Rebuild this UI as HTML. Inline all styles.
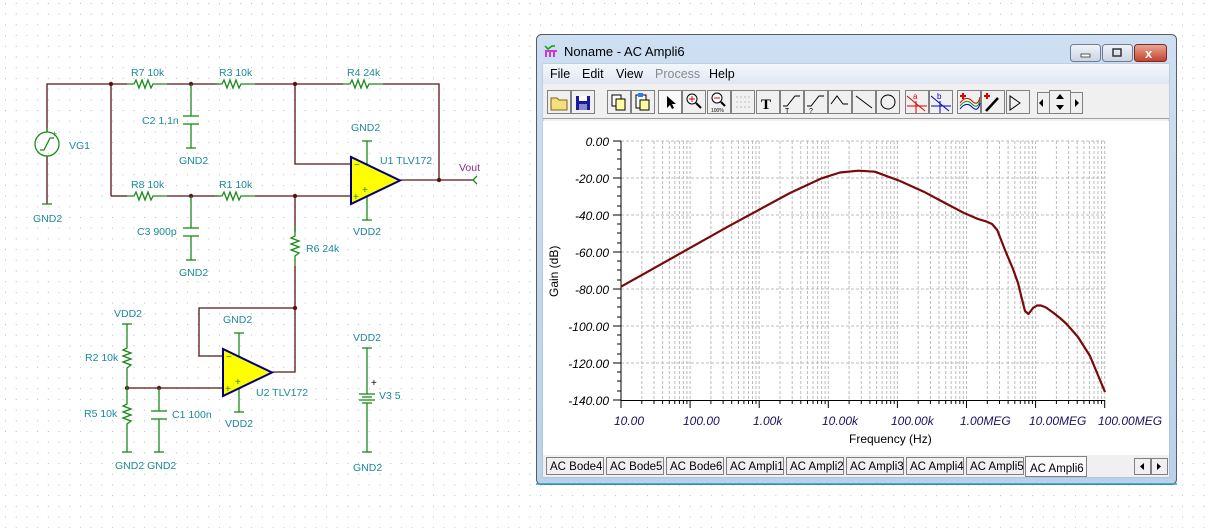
<!DOCTYPE html>
<html><head><meta charset="utf-8"><style>
html,body{margin:0;padding:0;background:#fff;}
body{width:1212px;height:528px;overflow:hidden;position:relative;font-family:"Liberation Sans",sans-serif;}
svg{position:absolute;left:0;top:0;}
</style></head><body>
<svg width="1212" height="528" viewBox="0 0 1212 528" xmlns="http://www.w3.org/2000/svg" font-family="Liberation Sans, sans-serif">
<defs>
<pattern id="dots" x="5" y="3" width="10.7" height="10.7" patternUnits="userSpaceOnUse"><rect x="0" y="0" width="1" height="1" fill="#b8b8b8"/></pattern>
<linearGradient id="tb" x1="0" y1="0" x2="0" y2="1"><stop offset="0" stop-color="#cfdff2"/><stop offset="1" stop-color="#b9d1ea"/></linearGradient>
<linearGradient id="mb" x1="0" y1="0" x2="0" y2="1"><stop offset="0" stop-color="#f4f7fc"/><stop offset="1" stop-color="#dfe6f2"/></linearGradient>
<linearGradient id="btn" x1="0" y1="0" x2="0" y2="1"><stop offset="0" stop-color="#f2f4f8"/><stop offset="1" stop-color="#c9d4e4"/></linearGradient>
<linearGradient id="red" x1="0" y1="0" x2="0" y2="1"><stop offset="0" stop-color="#e9a99a"/><stop offset="1" stop-color="#c4402a"/></linearGradient>
</defs>
<rect width="1212" height="528" fill="url(#dots)"/>

<!-- ============ SCHEMATIC ============ -->
<g stroke="#5a1414" stroke-width="1.3" fill="none">
<polyline points="47,132 47,84 127,84"/>
<line x1="167" y1="84" x2="219" y2="84"/>
<line x1="255" y1="84" x2="343" y2="84"/>
<polyline points="383,84 439,84 439,180"/>
<line x1="111" y1="84" x2="111" y2="196"/>
<line x1="111" y1="196" x2="127" y2="196"/>
<line x1="167" y1="196" x2="219" y2="196"/>
<line x1="255" y1="196" x2="350" y2="196"/>
<polyline points="295,84 295,164 350,164"/>
<line x1="400" y1="180" x2="473" y2="180"/>
<line x1="295" y1="196" x2="295" y2="232"/>
<polyline points="295,266 295,372 272,372"/>
<polyline points="295,308 199,308 199,356 222,356"/>
<line x1="127" y1="388" x2="222" y2="388"/>
<line x1="47" y1="156" x2="47" y2="204"/>
</g>
<g fill="#5a1414">
<circle cx="111" cy="84" r="2.2"/><circle cx="191" cy="84" r="2.2"/><circle cx="295" cy="84" r="2.2"/>
<circle cx="191" cy="196" r="2.2"/><circle cx="295" cy="196" r="2.2"/><circle cx="439" cy="180" r="2.2"/>
<circle cx="295" cy="308" r="2.2"/><circle cx="127" cy="388" r="2.2"/><circle cx="159" cy="388" r="2.2"/>
</g>
<g stroke="#1a8a1a" stroke-width="1.3" fill="none">
<!-- resistors horizontal -->
<polyline points="127,84 134,84 136,80 139,88 142,80 145,88 148,80 151,88 153,84 167,84"/>
<polyline points="215,84 222,84 224,80 227,88 230,80 233,88 236,80 239,88 241,84 255,84"/>
<polyline points="343,84 350,84 352,80 355,88 358,80 361,88 364,80 367,88 369,84 383,84"/>
<polyline points="127,196 134,196 136,192 139,200 142,192 145,200 148,192 151,200 153,196 167,196"/>
<polyline points="215,196 222,196 224,192 227,200 230,192 233,200 236,192 239,200 241,196 255,196"/>
<!-- R6 vertical -->
<polyline points="295,226 295,236 291,238 299,241 291,244 299,247 291,250 299,253 295,256 295,266"/>
<!-- R2, R5 -->
<polyline points="127,324 127,348 123,350 131,353 123,356 131,359 123,362 131,365 127,368 127,388"/>
<polyline points="127,388 127,404 123,406 131,409 123,412 131,415 123,418 131,421 127,424 127,452"/>
<line x1="122" y1="324" x2="132" y2="324"/><line x1="122" y1="452" x2="132" y2="452"/>
<!-- C2 -->
<line x1="191" y1="84" x2="191" y2="116"/><line x1="183" y1="116" x2="199" y2="116"/><line x1="183" y1="124" x2="199" y2="124"/><line x1="191" y1="124" x2="191" y2="148"/><line x1="186" y1="148" x2="196" y2="148"/>
<!-- C3 -->
<line x1="191" y1="196" x2="191" y2="228"/><line x1="183" y1="228" x2="199" y2="228"/><line x1="183" y1="236" x2="199" y2="236"/><line x1="191" y1="236" x2="191" y2="260"/><line x1="186" y1="260" x2="196" y2="260"/>
<!-- C1 -->
<line x1="159" y1="388" x2="159" y2="411"/><line x1="151" y1="411" x2="167" y2="411"/><line x1="151" y1="419" x2="167" y2="419"/><line x1="159" y1="419" x2="159" y2="452"/><line x1="154" y1="452" x2="164" y2="452"/>
<!-- VG1 -->
<circle cx="47" cy="144" r="12"/><path d="M40,150 L44,150 L50,138 L54,138"/><line x1="47" y1="128" x2="47" y2="132"/>
<line x1="42" y1="204" x2="52" y2="204"/>
<!-- U1 supply -->
<line x1="367" y1="141" x2="367" y2="165"/><line x1="362" y1="141" x2="372" y2="141"/>
<line x1="367" y1="197" x2="367" y2="220"/><line x1="362" y1="220" x2="372" y2="220"/>
<!-- U2 supply -->
<line x1="239" y1="333" x2="239" y2="357"/><line x1="234" y1="333" x2="244" y2="333"/>
<line x1="239" y1="388" x2="239" y2="412"/><line x1="234" y1="412" x2="244" y2="412"/>
<!-- V3 -->
<line x1="367" y1="348" x2="367" y2="394"/><line x1="362" y1="348" x2="372" y2="348"/>
<line x1="359" y1="394" x2="375" y2="394"/><line x1="362" y1="397" x2="372" y2="397"/>
<line x1="359" y1="400" x2="375" y2="400"/><line x1="362" y1="403" x2="372" y2="403"/>
<line x1="367" y1="403" x2="367" y2="452"/><line x1="362" y1="452" x2="372" y2="452"/>
<!-- Vout -->
<path d="M477,176 L473,180 L477,184"/>
</g>
<text x="52" y="137" font-size="9" fill="#1a8a1a">+</text>
<text x="371" y="386" font-size="10" fill="#000">+</text>
<!-- opamps -->
<polygon points="351,157 351,204 400,180.5" fill="#ffff00" stroke="#000080" stroke-width="2"/>
<polygon points="223,349 223,396 272,372.5" fill="#ffff00" stroke="#000080" stroke-width="2"/>
<g fill="#1a8a1a" font-size="10"><text x="354" y="168">−</text><text x="353" y="200">+</text><text x="362" y="193">+</text>
<text x="226" y="360">−</text><text x="225" y="392">+</text><text x="235" y="385">+</text></g>
<!-- labels -->
<g fill="#1a8a9a" font-size="10.5">
<text x="131" y="76">R7 10k</text><text x="219" y="76">R3 10k</text><text x="347" y="76">R4 24k</text>
<text x="142" y="124">C2 1,1n</text><text x="179" y="164">GND2</text>
<text x="69" y="149">VG1</text><text x="33" y="222">GND2</text>
<text x="131" y="188">R8 10k</text><text x="219" y="188">R1 10k</text>
<text x="137" y="235">C3 900p</text><text x="179" y="276">GND2</text>
<text x="351" y="131">GND2</text><text x="380" y="164">U1 TLV172</text><text x="353" y="235">VDD2</text>
<text x="306" y="252">R6 24k</text>
<text x="114" y="317">VDD2</text><text x="223" y="323">GND2</text>
<text x="85" y="361">R2 10k</text><text x="84" y="417">R5 10k</text><text x="172" y="418">C1 100n</text>
<text x="256" y="396">U2 TLV172</text><text x="225" y="427">VDD2</text>
<text x="353" y="341">VDD2</text><text x="379" y="399">V3 5</text>
<text x="115" y="469">GND2 GND2</text><text x="353" y="471">GND2</text>
</g>
<text x="459" y="171" font-size="10.5" fill="#8a2a9a">Vout</text>

<!-- ============ WINDOW ============ -->
<rect x="536.5" y="34.5" width="640" height="450" rx="5" fill="url(#tb)" stroke="#555d6a"/>
<rect x="543" y="64" width="626" height="413" fill="#f0f0f0" stroke="#8fa4be" stroke-width="0.5"/>
<!-- title -->
<g stroke-width="1.5" fill="none"><path d="M545,46 l3,3 4,-3 3,0" stroke="#00aa00"/><path d="M545,51 h12" stroke="#cc00cc"/><path d="M546,52 v5 M550,52 v5 M554,52 v5" stroke="#cc00cc"/></g>
<text x="564" y="56" font-size="13" fill="#000">Noname - AC Ampli6</text>
<rect x="1070.5" y="44.5" width="30" height="17" rx="3" fill="url(#btn)" stroke="#6d7c93"/>
<rect x="1081" y="54" width="9" height="3" fill="#fff" stroke="#333" stroke-width="0.8"/>
<rect x="1102.5" y="44.5" width="30" height="17" rx="3" fill="url(#btn)" stroke="#6d7c93"/>
<rect x="1113" y="49" width="8" height="7" fill="none" stroke="#333" stroke-width="1.5"/>
<rect x="1134.5" y="44.5" width="32" height="17" rx="3" fill="url(#red)" stroke="#7a2a22"/>
<text x="1145" y="58" font-size="13" font-weight="bold" fill="#fff">x</text>
<!-- menu -->
<rect x="543" y="64" width="626" height="20" fill="url(#mb)"/>
<g font-size="12.5" fill="#000"><text x="550" y="78">File</text><text x="582" y="78">Edit</text><text x="616" y="78">View</text><text x="655" y="78" fill="#8a8a8a">Process</text><text x="709" y="78">Help</text></g>
<!-- toolbar -->
<rect x="543" y="84" width="626" height="35" fill="#f0f0f0"/>
<line x1="543" y1="118.5" x2="1169" y2="118.5" stroke="#a0a0a0"/>
<g fill="#f0f0f0" stroke="#808080">
<rect x="547.5" y="90.5" width="23" height="23"/><rect x="571.5" y="90.5" width="23" height="23"/>
<rect x="607.5" y="90.5" width="23" height="23"/><rect x="631.5" y="90.5" width="23" height="23"/>
<rect x="658.5" y="90.5" width="23" height="23" fill="#fafafa"/><rect x="682.5" y="90.5" width="23" height="23"/><rect x="707.5" y="90.5" width="23" height="23"/><rect x="731.5" y="90.5" width="23" height="23"/>
<rect x="756.5" y="90.5" width="23" height="23"/><rect x="780.5" y="90.5" width="23" height="23"/><rect x="804.5" y="90.5" width="23" height="23"/><rect x="828.5" y="90.5" width="23" height="23"/><rect x="852.5" y="90.5" width="23" height="23"/><rect x="876.5" y="90.5" width="23" height="23"/>
<rect x="905.5" y="90.5" width="23" height="23"/><rect x="929.5" y="90.5" width="23" height="23"/>
<rect x="957.5" y="90.5" width="23" height="23"/><rect x="981.5" y="90.5" width="23" height="23"/><rect x="1006.5" y="90.5" width="23" height="23"/>
<rect x="1037.5" y="92.5" width="12" height="21"/><rect x="1049.5" y="90.5" width="21" height="23"/><rect x="1070.5" y="92.5" width="12" height="21"/>
</g>
<path d="M551,98 h6 l2,2 h8 v10 h-16z" fill="#f2e07a" stroke="#806020"/>
<rect x="576" y="96" width="14" height="14" fill="#1a1aa0"/><rect x="579" y="96" width="8" height="5" fill="#fff"/><rect x="579" y="104" width="8" height="6" fill="#8888cc"/>
<rect x="612" y="95" width="9" height="11" fill="#fff" stroke="#000"/><rect x="616" y="99" width="9" height="11" fill="#ffffa0" stroke="#000"/>
<rect x="636" y="95" width="10" height="13" fill="#fff" stroke="#000"/><rect x="640" y="100" width="9" height="10" fill="#ffffa0" stroke="#000"/><rect x="638" y="93" width="5" height="4" fill="#2080ff"/>
<path d="M667,96 v12 l3,-3 2,4 2,-1 -2,-4 4,0z" fill="#000"/>
<circle cx="692" cy="99" r="5" fill="#fff" stroke="#000"/><path d="M689,99h6M692,96v6" stroke="#d00"/><path d="M696,103 l5,5" stroke="#000" stroke-width="2"/>
<circle cx="717" cy="98" r="5" fill="#fff" stroke="#000"/><path d="M714,98h6" stroke="#d00"/><path d="M721,102 l4,4" stroke="#000" stroke-width="2"/><text x="711" y="112" font-size="5">100%</text>
<g fill="#999"><circle cx="737" cy="97" r=".6"/><circle cx="741" cy="97" r=".6"/><circle cx="745" cy="97" r=".6"/><circle cx="749" cy="97" r=".6"/><circle cx="737" cy="102" r=".6"/><circle cx="741" cy="102" r=".6"/><circle cx="745" cy="102" r=".6"/><circle cx="749" cy="102" r=".6"/><circle cx="737" cy="107" r=".6"/><circle cx="741" cy="107" r=".6"/><circle cx="745" cy="107" r=".6"/><circle cx="749" cy="107" r=".6"/></g>
<text x="761" y="109" font-size="15" font-weight="bold" font-family="Liberation Serif, serif">T</text>
<g stroke="#000" fill="none"><path d="M783,106 h4 l8,-10 h5"/><path d="M807,106 h4 l8,-10 h5"/><path d="M831,104 l6,-8 6,8 h5"/><path d="M856,96 l16,12"/><circle cx="888" cy="102" r="7"/><path d="M1010,96 v14 l10,-7z"/></g>
<text x="785" y="113" font-size="7">T</text><text x="809" y="113" font-size="7">?</text>
<g stroke="#d00"><path d="M907,96 l18,15 M907,106 h20 M916,101 v12"/></g><text x="913" y="99" font-size="8" fill="#d00">a</text>
<g stroke="#00c"><path d="M931,96 l18,15 M931,106 h20 M940,101 v12"/></g><text x="937" y="99" font-size="8" fill="#00c">b</text>
<path d="M960,96 h6 M963,93 v6" stroke="#d00" stroke-width="2"/><path d="M960,106 q6,-8 12,-2 t8,-4" stroke="#0a0" fill="none"/><path d="M960,109 q6,-8 12,-2 t8,-4" stroke="#00c" fill="none"/><path d="M960,103 q6,-8 12,-2 t8,-4" stroke="#d00" fill="none"/>
<path d="M984,96 h6 M987,93 v6" stroke="#d00" stroke-width="2"/><path d="M986,111 l12,-13" stroke="#000" stroke-width="2.5"/>
<path d="M1043,99 v8 l-4,-4z M1060,94 l-4,5 h8z M1060,110 l-4,-5 h8z M1075,99 v8 l4,-4z" fill="#000"/>
<!-- plot area -->
<rect x="543" y="121" width="626" height="334" fill="#fff"/>
<g stroke="#b4b4b4" stroke-width="1" stroke-dasharray="3,2" id="grid"></g>
<g stroke="#bcbcbc" stroke-width="1" stroke-dasharray="3,2">
<!-- vertical grid generated -->
<path d="M641.8,141V400M654,141V400M662.6,141V400M669.3,141V400M674.8,141V400M679.4,141V400M683.4,141V400M686.9,141V400M690.1,141V400
M710.9,141V400M723.1,141V400M731.7,141V400M738.4,141V400M743.9,141V400M748.5,141V400M752.5,141V400M756,141V400M759.2,141V400
M780,141V400M792.2,141V400M800.8,141V400M807.5,141V400M813,141V400M817.6,141V400M821.6,141V400M825.1,141V400M828.3,141V400
M849.1,141V400M861.3,141V400M869.9,141V400M876.6,141V400M882.1,141V400M886.7,141V400M890.7,141V400M894.2,141V400M897.4,141V400
M918.2,141V400M930.4,141V400M939,141V400M945.7,141V400M951.2,141V400M955.8,141V400M959.8,141V400M963.3,141V400M966.5,141V400
M987.3,141V400M999.5,141V400M1008.1,141V400M1014.8,141V400M1020.3,141V400M1024.9,141V400M1028.9,141V400M1032.4,141V400M1035.6,141V400
M1056.4,141V400M1068.6,141V400M1077.2,141V400M1083.9,141V400M1089.4,141V400M1094,141V400M1098,141V400M1101.5,141V400M1104.7,141V400
M621,141H1105M621,178H1105M621,215H1105M621,252H1105M621,289H1105M621,326H1105M621,363H1105"/>
</g>
<g stroke="#000" stroke-width="1" fill="none">
<line x1="621" y1="141" x2="621" y2="400"/><line x1="621" y1="400.5" x2="1105" y2="400.5"/>
<path d="M613,141h8M613,178h8M613,215h8M613,252h8M613,289h8M613,326h8M613,363h8M613,400h8
M617,150h4M617,159h4M617,169h4M617,187h4M617,196h4M617,206h4M617,224h4M617,233h4M617,243h4M617,261h4M617,270h4M617,280h4M617,298h4M617,307h4M617,317h4M617,335h4M617,344h4M617,354h4M617,372h4M617,381h4M617,391h4
M621,400v8M690.1,400v8M759.2,400v8M828.3,400v8M897.4,400v8M966.5,400v8M1035.6,400v8M1104.7,400v8"/>
<path d="M641.8,400v4M654,400v4M662.6,400v4M669.3,400v4M674.8,400v4M679.4,400v4M683.4,400v4M686.9,400v4M710.9,400v4M723.1,400v4M731.7,400v4M738.4,400v4M743.9,400v4M748.5,400v4M752.5,400v4M756,400v4M780,400v4M792.2,400v4M800.8,400v4M807.5,400v4M813,400v4M817.6,400v4M821.6,400v4M825.1,400v4M849.1,400v4M861.3,400v4M869.9,400v4M876.6,400v4M882.1,400v4M886.7,400v4M890.7,400v4M894.2,400v4M918.2,400v4M930.4,400v4M939,400v4M945.7,400v4M951.2,400v4M955.8,400v4M959.8,400v4M963.3,400v4M987.3,400v4M999.5,400v4M1008.1,400v4M1014.8,400v4M1020.3,400v4M1024.9,400v4M1028.9,400v4M1032.4,400v4M1056.4,400v4M1068.6,400v4M1077.2,400v4M1083.9,400v4M1089.4,400v4M1094,400v4M1098,400v4M1101.5,400v4"/>
</g>
<g font-size="12" font-style="italic" fill="#000" text-anchor="end">
<text x="609" y="146">0.00</text><text x="609" y="183">-20.00</text><text x="609" y="220">-40.00</text><text x="609" y="257">-60.00</text><text x="609" y="294">-80.00</text><text x="609" y="331">-100.00</text><text x="609" y="368">-120.00</text><text x="609" y="405">-140.00</text>
</g>
<g font-size="12" font-style="italic" fill="#1a1060">
<text x="614" y="425">10.00</text><text x="683" y="425">100.00</text><text x="753" y="425">1.00k</text><text x="822" y="425">10.00k</text><text x="891" y="425">100.00k</text><text x="960" y="425">1.00MEG</text><text x="1029" y="425">10.00MEG</text><text x="1098" y="425">100.00MEG</text>
</g>
<text x="849" y="443" font-size="12" fill="#000">Frequency (Hz)</text>
<text transform="translate(558,297) rotate(-90)" font-size="12" fill="#000">Gain (dB)</text>
<path d="M621,286.7 L727.8,226.7 L790,193 L821.7,178.3 L840,172.5 L858.4,170.7 L874.8,171.7 L900,181 L923.8,191.7 L945,203 L964.6,213.3 L978,219 L987,221.7 L992,224 L997.2,230 L1005,250 L1013,269 L1018,283 L1021.7,298 L1025,311 L1028.5,314 L1033,308 L1037,305.5 L1041,305.5 L1046,307.5 L1052.3,312 L1060,318 L1066.6,324 L1078,337 L1090,356 L1105,392" fill="none" stroke="#7a0a0a" stroke-width="2.2" stroke-linejoin="round"/>
<!-- tabs -->
<rect x="543" y="455" width="626" height="22" fill="#f0f0f0"/>
<g fill="#f0f0f0" stroke="#808080">
<rect x="546.5" y="457.5" width="57" height="17"/><rect x="606.5" y="457.5" width="57" height="17"/><rect x="666.5" y="457.5" width="57" height="17"/><rect x="726.5" y="457.5" width="57" height="17"/><rect x="786.5" y="457.5" width="57" height="17"/><rect x="846.5" y="457.5" width="57" height="17"/><rect x="906.5" y="457.5" width="57" height="17"/><rect x="966.5" y="457.5" width="57" height="17"/>
<rect x="1025.5" y="456.5" width="61" height="20" fill="#fafafa"/>
<rect x="1134.5" y="458.5" width="16" height="16"/><rect x="1151.5" y="458.5" width="16" height="16"/>
</g>
<g font-size="11.5" fill="#000">
<text x="550" y="470">AC Bode4</text><text x="610" y="470">AC Bode5</text><text x="670" y="470">AC Bode6</text><text x="730" y="470">AC Ampli1</text><text x="790" y="470">AC Ampli2</text><text x="850" y="470">AC Ampli3</text><text x="910" y="470">AC Ampli4</text><text x="970" y="470">AC Ampli5</text><text x="1030" y="472">AC Ampli6</text>
</g>
<path d="M1144,463v7l-4,-3.5z M1157,463v7l4,-3.5z" fill="#000"/>
<line x1="536" y1="484" x2="1177" y2="484" stroke="#2aa0c0" stroke-width="1.5"/>
</svg>
</body></html>
